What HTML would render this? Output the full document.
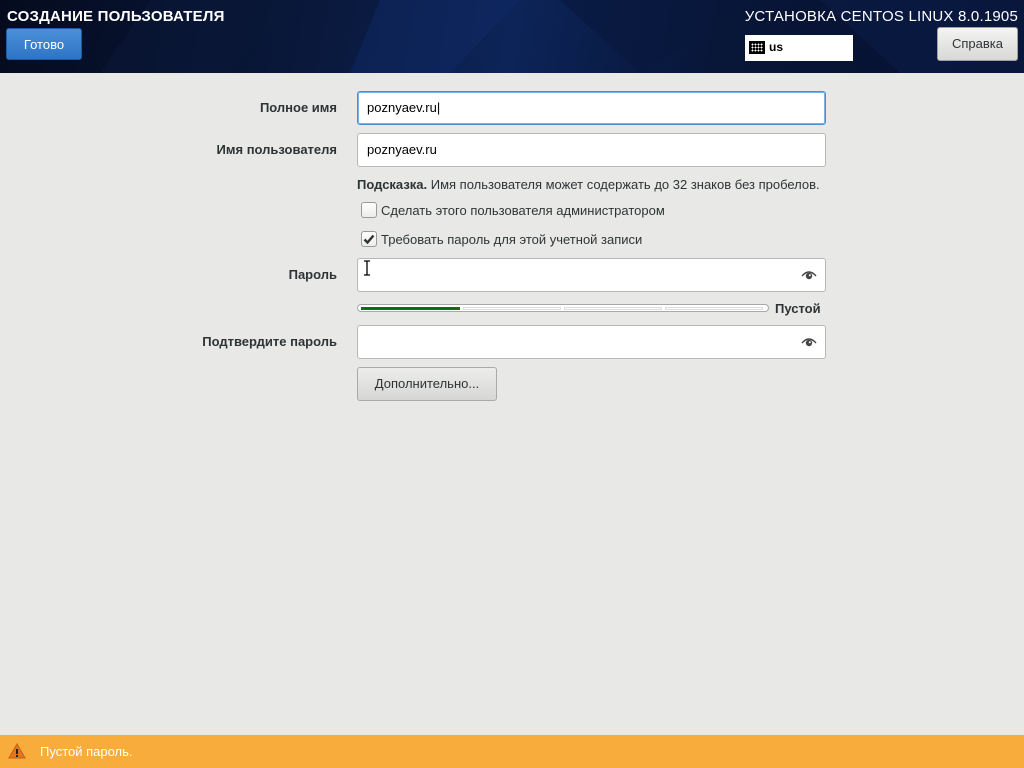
<!DOCTYPE html>
<html><head><meta charset="utf-8"><style>
*{box-sizing:border-box}
body{margin:0;width:1024px;height:768px;background:#e8e8e7;font-family:"Liberation Sans","DejaVu Sans",sans-serif;position:relative;overflow:hidden;color:#2e3436}
.hdr{position:absolute;left:0;top:0;width:1024px;height:73px;background:linear-gradient(100deg,#050b1e 0%,#0a1a40 35%,#0c2458 50%,#081638 70%,#061030 100%);overflow:hidden}
.hdr .t1{position:absolute;left:7px;top:8px;color:#fff;font-size:15px;font-weight:bold;letter-spacing:.2px}
.hdr .t2{position:absolute;right:6px;top:8px;color:#fff;font-size:15px;letter-spacing:.2px}
.btn{position:absolute;border-radius:3px;font-size:13px;text-align:center}
.done{left:6px;top:28px;width:76px;height:32px;line-height:31px;background:linear-gradient(#4a90d9,#2f74c4);border:1px solid #1f5ba0;color:#fff}
.help{left:937px;top:27px;width:81px;height:34px;line-height:32px;background:linear-gradient(#f4f4f3,#d8d8d6);border:1px solid #a0a0a0;color:#2e3436}
.kb{position:absolute;left:745px;top:35px;width:108px;height:26px;background:#fff;font-size:12px;font-weight:bold;color:#000;padding:5px 0 0 24px}
.kb i{position:absolute;left:4px;top:6px;width:16px;height:13px;background:#000;border:2px solid #000;background-image:radial-gradient(#fff 40%,transparent 41%);background-size:3px 3px}
.lbl{position:absolute;right:687px;font-size:13px;font-weight:bold;color:#2e3436;white-space:nowrap}
.inp{position:absolute;left:357px;width:469px;height:34px;background:#fff;border:1px solid #b8b8b6;border-radius:3px;font-size:13px;padding:8px 0 0 9px;color:#000}
.eye{position:absolute;right:8px;top:10px;width:16px;height:12px}
.cb{position:absolute;left:361px;width:16px;height:16px;border:1px solid #9a9a98;border-radius:3px;background:linear-gradient(#fff,#ececea)}
.txt{position:absolute;font-size:13px;white-space:nowrap;color:#2e3436}
.bar{position:absolute;left:357px;top:304px;width:412px;height:8px;border:1px solid #a8a8a6;border-radius:4px;background:#fff}
.warn{position:absolute;left:0;top:735px;width:1024px;height:33px;background:#f8ac3c}
</style></head><body>
<div class="hdr">
<svg width="1024" height="73" style="position:absolute;left:0;top:0">
<polygon points="380,0 520,0 450,73 350,73" fill="#0f2a66" opacity=".5"/>
<polygon points="560,0 760,0 640,73" fill="#08173c" opacity=".6"/>
<polygon points="820,0 1024,0 1024,73 900,73" fill="#0b1e4a" opacity=".5"/>
<polygon points="150,0 300,0 230,73 100,73" fill="#0a1838" opacity=".5"/>
</svg>
<div class="t1">СОЗДАНИЕ ПОЛЬЗОВАТЕЛЯ</div>
<div class="t2">УСТАНОВКА CENTOS LINUX 8.0.1905</div>
</div>
<div class="btn done">Готово</div>
<div class="kb"><i></i>us</div>
<div class="btn help">Справка</div>

<div class="lbl" style="top:100px">Полное имя</div>
<div class="inp" style="top:91px;border:1px solid #4a90d9;box-shadow:0 0 0 1px #7fb0e6 inset">poznyaev.ru|</div>
<div class="lbl" style="top:142px">Имя пользователя</div>
<div class="inp" style="top:133px">poznyaev.ru</div>
<div class="txt" style="left:357px;top:177px"><b>Подсказка.</b> Имя пользователя может содержать до 32 знаков без пробелов.</div>
<div class="cb" style="top:202px"></div>
<div class="txt" style="left:381px;top:203px">Сделать этого пользователя администратором</div>
<div class="cb" style="top:231px"><svg width="14" height="14" style="position:absolute;left:0;top:0"><path d="M2.5 7.5 L5.5 10.5 L11.5 3.5" stroke="#2e3436" stroke-width="2.4" fill="none"/></svg></div>
<div class="txt" style="left:381px;top:232px">Требовать пароль для этой учетной записи</div>

<div class="lbl" style="top:267px">Пароль</div>
<div class="inp" style="top:258px"><svg width="8" height="16" style="position:absolute;left:5px;top:1px"><path d="M1 1 H7 M4 1 V15 M1 15 H7" stroke="#000" stroke-width="1.3" fill="none"/></svg><svg class="eye" viewBox="0 0 16 12"><path d="M1 7 Q8 -1 15 7" stroke="#444" stroke-width="1.4" fill="none"/><circle cx="8" cy="7" r="3.2" fill="#444"/><circle cx="8.8" cy="6.2" r="1" fill="#fff"/></svg></div>
<div class="bar"><div style="position:absolute;left:3px;top:2px;width:99px;height:3px;background:#0b7013"></div>
<div style="position:absolute;left:105px;top:2px;width:98px;height:3px;border:1px solid #ddd"></div>
<div style="position:absolute;left:206px;top:2px;width:98px;height:3px;border:1px solid #ddd"></div>
<div style="position:absolute;left:307px;top:2px;width:98px;height:3px;border:1px solid #ddd"></div></div>
<div class="txt" style="left:775px;top:301px;font-weight:bold">Пустой</div>
<div class="lbl" style="top:334px">Подтвердите пароль</div>
<div class="inp" style="top:325px"><svg class="eye" viewBox="0 0 16 12"><path d="M1 7 Q8 -1 15 7" stroke="#444" stroke-width="1.4" fill="none"/><circle cx="8" cy="7" r="3.2" fill="#444"/><circle cx="8.8" cy="6.2" r="1" fill="#fff"/></svg></div>
<div class="btn" style="left:357px;top:367px;width:140px;height:34px;line-height:32px;background:linear-gradient(#ededec,#d6d6d4);border:1px solid #aaa;color:#2e3436">Дополнительно...</div>

<div class="warn">
<svg width="18" height="16" style="position:absolute;left:8px;top:8px"><path d="M9 1 L17 15 L1 15 Z" fill="#e8761c" stroke="#c65f10"/><rect x="8" y="6" width="2" height="5" fill="#222"/><rect x="8" y="12" width="2" height="2" fill="#222"/></svg>
<div class="txt" style="left:40px;top:9px;color:#fff">Пустой пароль.</div>
</div>
</body></html>
